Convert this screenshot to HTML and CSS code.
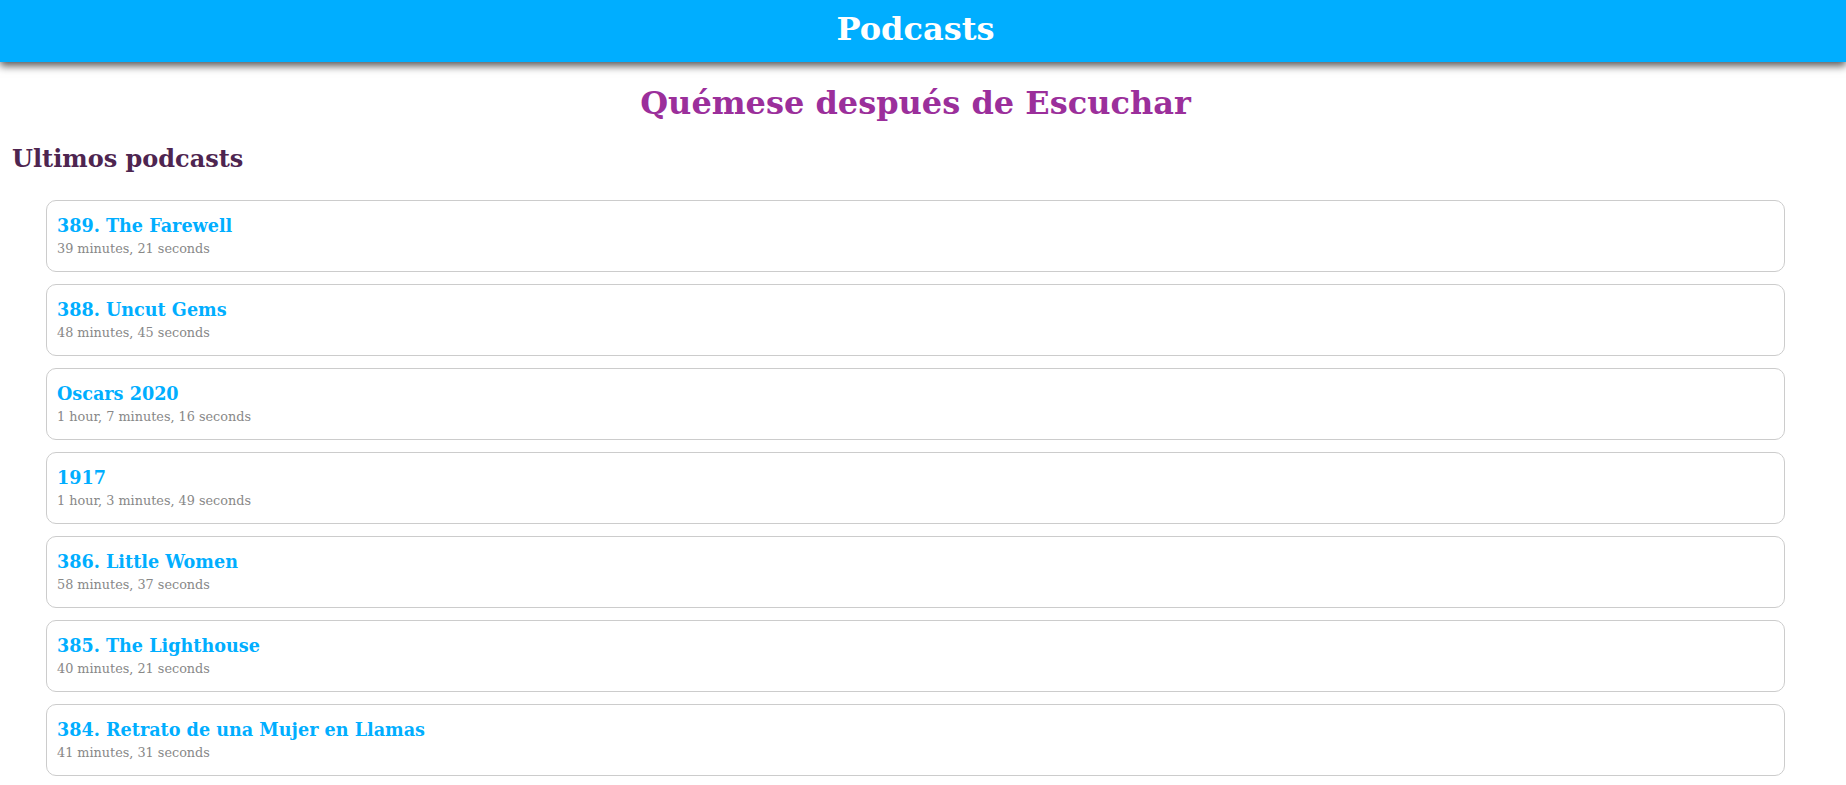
FILE: index.html
```html
<!DOCTYPE html>
<html lang="es">
<head>
<meta charset="utf-8">
<title>Podcasts</title>
<link rel="stylesheet" href="styles.css">
</head>
<body>
<header class="topbar">
  <h1 class="topbar-title">Podcasts</h1>
</header>
<main class="content">
  <h1 class="show-title">Quémese después de Escuchar</h1>
  <h2 class="section-title">Ultimos podcasts</h2>
  <ul class="episodes">
    <li class="episode"><span class="episode-title">389. The Farewell</span><span class="episode-duration">39 minutes, 21 seconds</span></li>
    <li class="episode"><span class="episode-title">388. Uncut Gems</span><span class="episode-duration">48 minutes, 45 seconds</span></li>
    <li class="episode"><span class="episode-title">Oscars 2020</span><span class="episode-duration">1 hour, 7 minutes, 16 seconds</span></li>
    <li class="episode"><span class="episode-title">1917</span><span class="episode-duration">1 hour, 3 minutes, 49 seconds</span></li>
    <li class="episode"><span class="episode-title">386. Little Women</span><span class="episode-duration">58 minutes, 37 seconds</span></li>
    <li class="episode"><span class="episode-title">385. The Lighthouse</span><span class="episode-duration">40 minutes, 21 seconds</span></li>
    <li class="episode"><span class="episode-title">384. Retrato de una Mujer en Llamas</span><span class="episode-duration">41 minutes, 31 seconds</span></li>
  </ul>
</main>
</body>
</html>
```

FILE: styles.css
```css
* { box-sizing: border-box; }
html, body {
  margin: 0;
  padding: 0;
  background: #ffffff;
  font-family: "DejaVu Serif", serif;
}
.topbar {
  background: #00aeff;
  height: 62px;
  display: flex;
  align-items: center;
  justify-content: center;
  padding: 0 15px 4px 0;
  box-shadow: 0 4px 8px rgba(0, 0, 0, 0.65);
  position: relative;
}
.topbar-title {
  margin: 0;
  color: #ffffff;
  font-size: 32px;
  font-weight: bold;
}
.content {
  padding: 0 15px 0 0;
}
.show-title {
  margin: 22px 0 0;
  text-align: center;
  color: #9b2f9b;
  font-size: 32px;
  font-weight: bold;
}
.section-title {
  margin: 22px 0 0 12px;
  color: #4e2550;
  font-size: 24px;
  font-weight: bold;
}
.episodes {
  list-style: none;
  margin: 27px 46px 0 46px;
  padding: 0;
  display: flex;
  flex-direction: column;
  gap: 12px;
}
.episode {
  border: 1px solid #cccccc;
  border-radius: 10px;
  height: 72px;
  padding: 14px 10px 0;
  display: flex;
  flex-direction: column;
}
.episode-title {
  color: #00aeff;
  font-size: 17.6px;
  font-weight: bold;
}
.episode-duration {
  color: #888888;
  font-size: 12.8px;
  margin-top: 5px;
}
```
